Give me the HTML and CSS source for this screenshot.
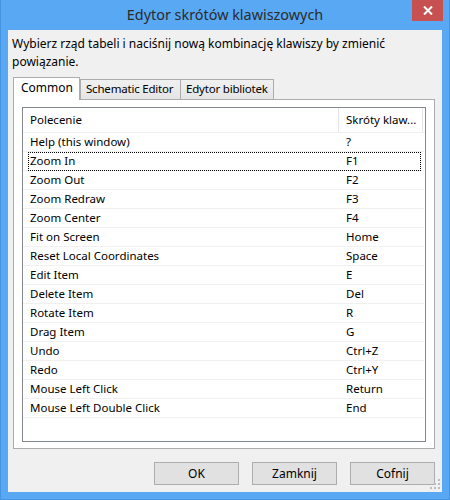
FILE: index.html
```html
<!DOCTYPE html>
<html lang="pl">
<head>
<meta charset="utf-8">
<title>Edytor skrótów klawiszowych</title>
<link rel="stylesheet" href="styles.css">
</head>
<body>
<div class="window">
  <div class="titlebar">
    <div class="title">Edytor skrótów klawiszowych</div>
    <div class="close">
      <svg width="10" height="9" viewBox="0 0 10 9"><path d="M1 0.5 L9 8.5 M9 0.5 L1 8.5" stroke="#fff" stroke-width="2"/></svg>
    </div>
  </div>
  <div class="client">
    <p class="intro">Wybierz rząd tabeli i naciśnij nową kombinację klawiszy by zmienić<br>powiązanie.</p>
    <div class="tabs">
      <div class="tab selected">Common</div>
      <div class="tab">Schematic Editor</div>
      <div class="tab">Edytor bibliotek</div>
    </div>
    <div class="panel">
      <div class="list">
        <div class="head">
          <div class="hcell c1">Polecenie</div>
          <div class="hcell c2">Skróty klaw...</div>
        </div>
        <div class="row"><div class="c1">Help (this window)</div><div class="c2">?</div></div>
        <div class="row focus"><div class="c1">Zoom In</div><div class="c2">F1</div></div>
        <div class="row"><div class="c1">Zoom Out</div><div class="c2">F2</div></div>
        <div class="row"><div class="c1">Zoom Redraw</div><div class="c2">F3</div></div>
        <div class="row"><div class="c1">Zoom Center</div><div class="c2">F4</div></div>
        <div class="row"><div class="c1">Fit on Screen</div><div class="c2">Home</div></div>
        <div class="row"><div class="c1">Reset Local Coordinates</div><div class="c2">Space</div></div>
        <div class="row"><div class="c1">Edit Item</div><div class="c2">E</div></div>
        <div class="row"><div class="c1">Delete Item</div><div class="c2">Del</div></div>
        <div class="row"><div class="c1">Rotate Item</div><div class="c2">R</div></div>
        <div class="row"><div class="c1">Drag Item</div><div class="c2">G</div></div>
        <div class="row"><div class="c1">Undo</div><div class="c2">Ctrl+Z</div></div>
        <div class="row"><div class="c1">Redo</div><div class="c2">Ctrl+Y</div></div>
        <div class="row"><div class="c1">Mouse Left Click</div><div class="c2">Return</div></div>
        <div class="row"><div class="c1">Mouse Left Double Click</div><div class="c2">End</div></div>
      </div>
    </div>
    <div class="buttons">
      <button class="btn">OK</button>
      <button class="btn">Zamknij</button>
      <button class="btn">Cofnij</button>
    </div>
    <svg class="grip" width="10" height="10" viewBox="0 0 10 10">
      <rect x="8" y="0" width="2" height="2" fill="#bcbcbc"/>
      <rect x="4" y="4" width="2" height="2" fill="#bcbcbc"/>
      <rect x="8" y="4" width="2" height="2" fill="#bcbcbc"/>
      <rect x="0" y="8" width="2" height="2" fill="#bcbcbc"/>
      <rect x="4" y="8" width="2" height="2" fill="#bcbcbc"/>
      <rect x="8" y="8" width="2" height="2" fill="#bcbcbc"/>
    </svg>
  </div>
</div>
</body>
</html>
```
FILE: styles.css
```css
* { box-sizing: border-box; }
html, body { margin: 0; padding: 0; }
body {
  width: 450px;
  height: 500px;
  font-family: "Noto Sans", "DejaVu Sans", sans-serif;
  font-size: 12px;
  color: #000;
  background: #58a8f4;
}
.window {
  width: 450px;
  height: 500px;
  background: #58a8f4;
  border: 1px solid #4594e2;
  border-top: 0;
  padding: 0 7px 7px 7px;
  display: flex;
  flex-direction: column;
}
.titlebar {
  height: 31px;
  display: grid;
  grid-template-columns: 1fr auto 1fr;
  margin: 0 -7px;
}
.title {
  grid-column: 2;
  font-size: 14.4px;
  line-height: 30px;
  color: #2b2b2b;
  white-space: nowrap;
}
.close {
  grid-column: 3;
  justify-self: end;
  width: 31px;
  height: 21px;
  margin-right: 6px;
  background: #c75050;
  display: flex;
  align-items: center;
  justify-content: center;
}
.close svg { display: block; }
.client {
  position: relative;
  flex: 1;
  background: #f0f0f0;
  padding: 5px 7px 7px 5px;
  display: flex;
  flex-direction: column;
}
.intro {
  margin: 0 0 5px -1px;
  line-height: 18px;
  height: 36px;
  white-space: nowrap;
}
.tabs {
  display: flex;
  align-items: flex-end;
  height: 23px;
  position: relative;
  z-index: 1;
}
.tab {
  height: 20px;
  padding: 0 0 0 5px;
  border: 1px solid #acacac;
  border-bottom: 0;
  margin-left: -1px;
  background: linear-gradient(#f0f0f0, #e5e5e5);
  font-size: 11.5px;
  letter-spacing: -0.2px;
  line-height: 18px;
  white-space: nowrap;
  overflow: hidden;
}
.tab:nth-child(2) { width: 101px; margin-left: 0; }
.tab:nth-child(3) { width: 94px; }
.tab.selected {
  width: 67px;
  height: 23px;
  margin-left: 0;
  margin-bottom: -1px;
  background: #ffffff;
  padding: 0 0 0 7px;
  font-size: 12px;
  letter-spacing: 0;
  line-height: 20px;
  z-index: 2;
  position: relative;
}
.panel {
  height: 350px;
  border: 1px solid #acacac;
  background: #ffffff;
  padding: 7px 8px 6px 8px;
  display: flex;
}
.list {
  flex: 1;
  border: 1px solid #828790;
  background: #fff;
  font-size: 11.5px;
}
.head {
  display: flex;
  height: 25px;
  border-bottom: 1px solid #f0f0f0;
}
.hcell {
  line-height: 24px;
  border-right: 1px solid #e5e5e5;
  white-space: nowrap;
  overflow: hidden;
}
.c1 { width: 316px; padding-left: 7px; }
.c2 { width: 84px; padding-left: 7px; }
.row {
  display: flex;
  height: 19px;
  line-height: 18px;
  border-bottom: 1px solid #f0f0f0;
  margin-right: 1px;
  white-space: nowrap;
}
.row.focus { position: relative; }
.row.focus::after {
  content: "";
  position: absolute;
  left: 5px;
  right: 3px;
  top: 0;
  bottom: -1px;
  border: 1px dotted #000;
}
.buttons {
  margin-top: 13px;
  display: flex;
  justify-content: flex-end;
  gap: 13px;
}
.btn {
  width: 85px;
  height: 23px;
  background: #e1e1e1;
  border: 1px solid #adadad;
  font-family: inherit;
  font-size: 12px;
  color: #000;
  padding: 0;
  line-height: 20px;
}
.grip {
  position: absolute;
  right: 2px;
  bottom: 3px;
}
```
